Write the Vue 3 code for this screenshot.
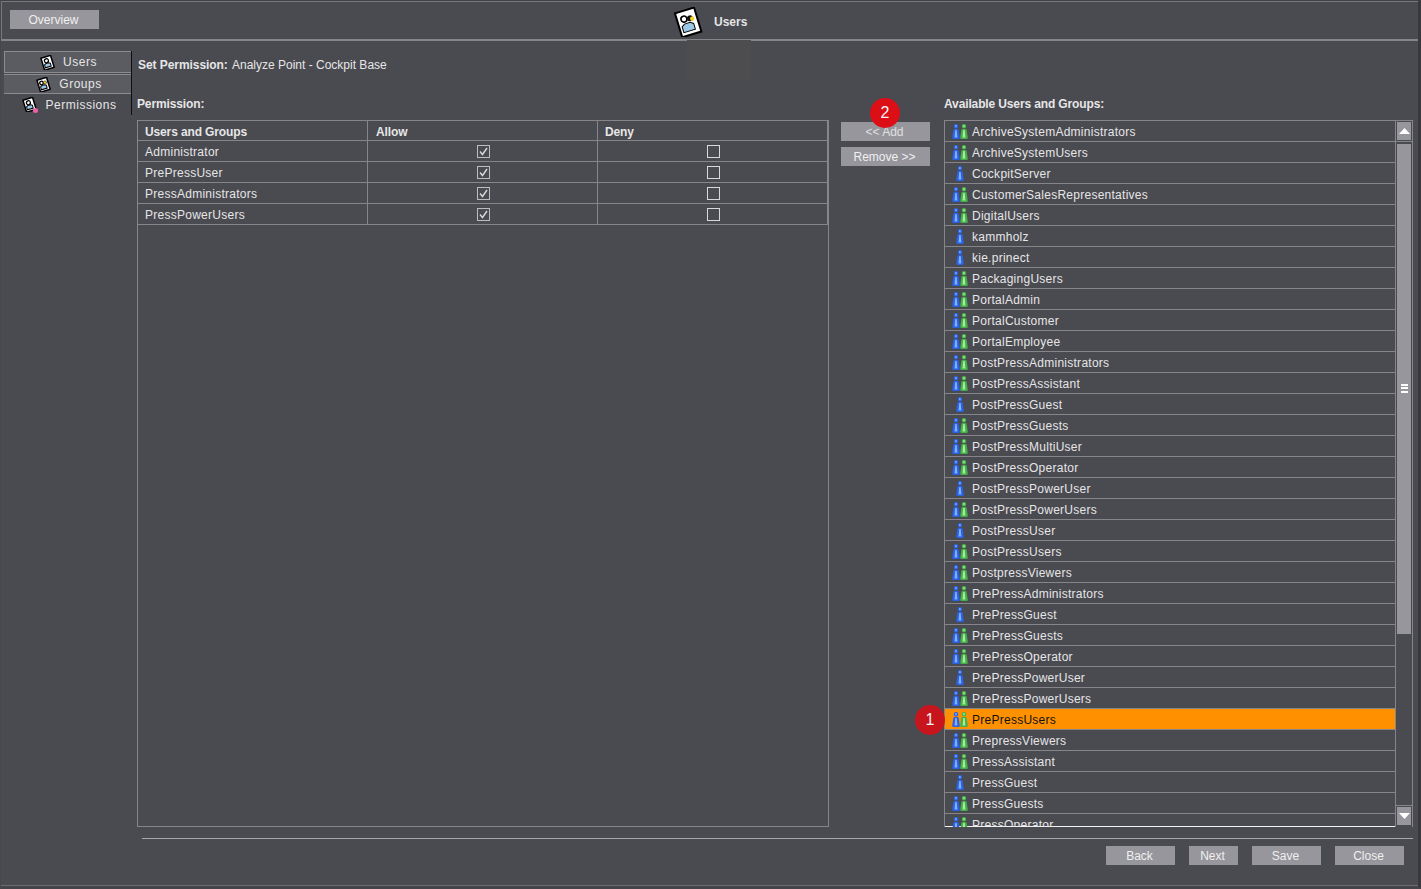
<script setup>
const permissions = [
  { name: 'Administrator' },
  { name: 'PrePressUser' },
  { name: 'PressAdministrators' },
  { name: 'PressPowerUsers' },
]

// g = group (two figures), u = single user
const available = [
  ['ArchiveSystemAdministrators', 'g'], ['ArchiveSystemUsers', 'g'], ['CockpitServer', 'u'],
  ['CustomerSalesRepresentatives', 'g'], ['DigitalUsers', 'g'], ['kammholz', 'u'], ['kie.prinect', 'u'],
  ['PackagingUsers', 'g'], ['PortalAdmin', 'g'], ['PortalCustomer', 'g'], ['PortalEmployee', 'g'],
  ['PostPressAdministrators', 'g'], ['PostPressAssistant', 'g'], ['PostPressGuest', 'u'],
  ['PostPressGuests', 'g'], ['PostPressMultiUser', 'g'], ['PostPressOperator', 'g'],
  ['PostPressPowerUser', 'u'], ['PostPressPowerUsers', 'g'], ['PostPressUser', 'u'],
  ['PostPressUsers', 'g'], ['PostpressViewers', 'g'], ['PrePressAdministrators', 'g'],
  ['PrePressGuest', 'u'], ['PrePressGuests', 'g'], ['PrePressOperator', 'g'],
  ['PrePressPowerUser', 'u'], ['PrePressPowerUsers', 'g'], ['PrePressUsers', 'g'],
  ['PrepressViewers', 'g'], ['PressAssistant', 'g'], ['PressGuest', 'u'], ['PressGuests', 'g'],
  ['PressOperator', 'g'],
].map(([name, type]) => ({ name, type }))

const figure = 'M1.7 2.2a2.3 2.2 0 1 1 4.6 0a2.3 2.2 0 1 1-4.6 0zM1.4 5.4Q1.5 5 2.4 5H5.6Q6.5 5 6.6 5.4L7.8 13.4Q8 15 6.5 15H1.5Q0 15 .2 13.4z'
const shine = 'M3.2 1h1.4v2.2H3.2zM3.2 6h1.5l.7 7.5H2.5z'
</script>

<template>
  <div class="screen">
    <header class="topbar">
      <button class="btn overview">Overview</button>
      <div class="title">
        <svg width="30" height="30" viewBox="0 0 30 30">
          <g transform="rotate(-17 15 15)">
            <rect x="5" y="3" width="20" height="25" fill="#fff" stroke="#000" stroke-width="2" />
            <path d="M7 3v-1M10 3v-1M13 3v-1M16 3v-1M19 3v-1M22 3v-1" stroke="#000" />
            <path d="M8 24v-6l3-2h6l3 2v6z" fill="#9cc8e6" stroke="#000" />
            <circle cx="12" cy="11" r="3" fill="#fff" stroke="#000" stroke-width="1.6" />
            <circle cx="18" cy="12" r="3" fill="#111" />
            <circle cx="20" cy="13" r="2.2" fill="#f4d320" />
          </g>
        </svg>
        <span>Users</span>
      </div>
      <div class="ghost"></div>
    </header>

    <div class="content">
      <nav class="sidenav">
        <a class="nav-item tab first">
          <svg width="15" height="15" viewBox="0 0 30 30">
            <g transform="rotate(-17 15 15)">
              <rect x="5" y="3" width="20" height="25" fill="#fff" stroke="#000" stroke-width="3" />
              <path d="M8 24v-6l3-2h6l3 2v6z" fill="#9cc8e6" stroke="#000" stroke-width="2" />
              <circle cx="14" cy="11" r="4" fill="#fff" stroke="#000" stroke-width="2.5" />
            </g>
          </svg>
          <span>Users</span>
        </a>
        <a class="nav-item tab second">
          <svg width="15" height="15" viewBox="0 0 30 30">
            <g transform="rotate(-17 15 15)">
              <rect x="5" y="3" width="20" height="25" fill="#fff" stroke="#000" stroke-width="3" />
              <path d="M8 24v-6l3-2h6l3 2v6z" fill="#9cc8e6" stroke="#000" stroke-width="2" />
              <circle cx="12" cy="11" r="3.5" fill="#fff" stroke="#000" stroke-width="2.5" />
              <circle cx="19" cy="12" r="3" fill="#f4d320" stroke="#000" />
            </g>
          </svg>
          <span>Groups</span>
        </a>
        <a class="nav-item third">
          <span class="perm-icon">
            <svg width="15" height="15" viewBox="0 0 30 30">
              <g transform="rotate(-17 15 15)">
                <rect x="5" y="3" width="20" height="25" fill="#fff" stroke="#000" stroke-width="3" />
                <path d="M8 24v-6l3-2h6l3 2v6z" fill="#9cc8e6" stroke="#000" stroke-width="2" />
                <circle cx="14" cy="11" r="4" fill="#fff" stroke="#000" stroke-width="2.5" />
              </g>
            </svg>
            <i class="pink-dot"></i>
          </span>
          <span>Permissions</span>
        </a>
      </nav>

      <main class="main">
        <div class="set-line"><b>Set Permission:</b> Analyze Point - Cockpit Base</div>

        <div class="columns">
          <section class="left">
            <h3 class="label">Permission:</h3>
            <div class="table-box">
              <div class="tr head">
                <div class="td c1">Users and Groups</div>
                <div class="td c2">Allow</div>
                <div class="td c3">Deny</div>
              </div>
              <div v-for="row in permissions" :key="row.name" class="tr">
                <div class="td c1">{{ row.name }}</div>
                <div class="td c2 center">
                  <svg width="13" height="13" viewBox="0 0 13 13">
                    <rect x="0.5" y="0.5" width="12" height="12" fill="none" stroke="#bdbdbd" />
                    <path d="M3 6.5l2.5 3L10 3" fill="none" stroke="#d8d8d8" stroke-width="1.4" />
                  </svg>
                </div>
                <div class="td c3 center">
                  <svg width="13" height="13" viewBox="0 0 13 13">
                    <rect x="0.5" y="0.5" width="12" height="12" fill="none" stroke="#d8d8d8" />
                  </svg>
                </div>
              </div>
            </div>
          </section>

          <section class="middle">
            <button class="btn wide add">&lt;&lt; Add<span class="badge two">2</span></button>
            <button class="btn wide">Remove &gt;&gt;</button>
          </section>

          <section class="right">
            <h3 class="label">Available Users and Groups:</h3>
            <div class="list-box">
              <div class="list">
                <div
                  v-for="item in available"
                  :key="item.name"
                  class="item"
                  :class="{ selected: item.name === 'PrePressUsers' }"
                >
                  <span class="figures" :class="{ single: item.type === 'u' }">
                    <svg width="8" height="15" viewBox="0 0 8 15"><path :d="figure" fill="#2a62e6" /><path :d="shine" fill="#7fb0ff" /></svg>
                    <svg v-if="item.type === 'g'" width="8" height="15" viewBox="0 0 8 15"><path :d="figure" fill="#45b045" /><path :d="shine" fill="#a4eca4" /></svg>
                  </span>
                  <span>{{ item.name }}</span>
                  <span v-if="item.name === 'PrePressUsers'" class="badge one">1</span>
                </div>
              </div>
              <div class="scrollbar">
                <div class="arrow">
                  <svg width="11" height="6" viewBox="0 0 11 6"><path d="M5.5 0L11 6H0z" fill="#fff" /></svg>
                </div>
                <div class="track">
                  <div class="thumb">
                    <i></i><i></i><i></i>
                  </div>
                </div>
                <div class="arrow">
                  <svg width="11" height="6" viewBox="0 0 11 6"><path d="M5.5 6L11 0H0z" fill="#fff" /></svg>
                </div>
              </div>
            </div>
          </section>
        </div>

        <footer class="footer">
          <button class="btn back">Back</button>
          <button class="btn next">Next</button>
          <button class="btn back">Save</button>
          <button class="btn back">Close</button>
        </footer>
      </main>
    </div>
  </div>
</template>

<style>
html, body { margin: 0; background: #4a4a51; }
</style>

<style scoped>
.screen {
  width: 1421px;
  height: 889px;
  box-sizing: border-box;
  background: #4a4a51;
  border-style: solid;
  border-width: 1px 3px 3px 1px;
  border-color: #3f3f45 #38383d #44444a #46464c;
  box-shadow: inset 0 -1px #6c6c72;
  display: flex;
  flex-direction: column;
  font-family: "Liberation Sans", Arial, sans-serif;
  font-size: 12px;
  color: #e6e6e6;
  overflow: hidden;
}

.topbar {
  position: relative;
  height: 40px;
  flex: none;
  box-sizing: border-box;
  border-top: 1px solid #77777c;
  border-left: 1px solid #77777c;
  border-bottom: 2px solid #85858a;
  display: flex;
  align-items: flex-start;
  padding: 8px 0 0 8px;
}

.title {
  display: flex;
  align-items: center;
  gap: 11px;
  margin-left: 574px;
  margin-top: -4px;
  height: 32px;
  font-weight: bold;
  color: #e4e4e4;
}

.ghost {
  position: absolute;
  left: 685px;
  top: 38px;
  width: 64px;
  height: 40px;
  background: #4d4d50;
}

.btn {
  border: 0;
  padding: 0 2px 0 0;
  background: #96969c;
  color: #f0f0f0;
  font: 12px "Liberation Sans", Arial, sans-serif;
  height: 19px;
  display: block;
}

.overview { width: 89px; }

.content {
  flex: 1;
  display: flex;
  min-height: 0;
}

.sidenav {
  width: 131px;
  flex: none;
  height: 64px;
  margin-top: 10px;
  box-sizing: border-box;
  padding-left: 3px;
  border-right: 1px solid #0f0f12;
  display: flex;
  flex-direction: column;
  letter-spacing: 0.5px;
}

.nav-item {
  display: flex;
  align-items: center;
  justify-content: center;
  height: 21px;
  box-sizing: border-box;
  padding-left: 3px;
  color: #e6e6e6;
  gap: 8px;
}

.tab { background: #5b5b62; }

.first {
  border: 1px solid #8b8b90;
  border-right: 0;
  height: 22px;
  padding: 1px 0 0 1px;
}

.second {
  border-top: 1px solid #8b8b90;
  border-bottom: 1px solid #8b8b90;
  margin-top: 1px;
}

.perm-icon { position: relative; display: flex; margin-right: 1px; }

.pink-dot {
  position: absolute;
  right: -1px;
  bottom: -1px;
  width: 5px;
  height: 5px;
  border-radius: 50%;
  background: #ef5fa8;
}

.main {
  flex: 1;
  min-width: 0;
  display: flex;
  flex-direction: column;
  padding-left: 5px;
}

.set-line {
  height: 18px;
  margin-top: 15px;
  line-height: 18px;
  padding-left: 1px;
}

.set-line b { letter-spacing: -0.06px; margin-right: 1.5px; }

.columns {
  display: flex;
  margin-top: 16px;
  height: 737px;
}

.label {
  margin: 0;
  height: 24px;
  font-size: 12px;
  line-height: 16px;
  font-weight: bold;
  letter-spacing: -0.13px;
  color: #e6e6e6;
}

.left { width: 692px; flex: none; margin-top: 6px; }

.table-box {
  height: 707px;
  box-sizing: border-box;
  border: 1px solid #85858a;
}

.tr {
  display: flex;
  height: 21px;
  box-sizing: border-box;
  border-bottom: 1px solid #85858a;
  letter-spacing: 0.26px;
}

.head {
  height: 20px;
  font-weight: bold;
  letter-spacing: -0.13px;
}

.td {
  flex: none;
  box-sizing: border-box;
  padding: 1px 0 0 7px;
  line-height: 20px;
  width: 230px;
  border-right: 1px solid #85858a;
  height: 100%;
}

.head .c2 { padding-left: 8px; }

.center {
  display: flex;
  align-items: center;
  justify-content: center;
  padding: 0 0 0 2px;
}

.middle {
  width: 89px;
  flex: none;
  margin-left: 12px;
  padding-top: 32px;
  display: flex;
  flex-direction: column;
  gap: 6px;
}

.wide { width: 89px; position: relative; }
.add { color: #e0e0e0; }

.badge {
  position: absolute;
  width: 30px;
  height: 30px;
  border-radius: 50%;
  background: #c8151d;
  color: #f4f4f4;
  font: 16px/30px "Liberation Sans", Arial, sans-serif;
  letter-spacing: 0;
  text-align: center;
}

.two { left: 29px; top: -24px; background: #dc0f16; }
.one { left: -30px; top: -4px; }

.right {
  width: 469px;
  flex: none;
  margin-left: 14px;
  margin-top: 6px;
}

.list-box {
  height: 707px;
  box-sizing: border-box;
  border: 1px solid #85858a;
  border-bottom: 0;
  display: flex;
}

.list {
  flex: 1;
  min-width: 0;
  /* clips the last row but still lets the callout badge stick out on the left */
  clip-path: inset(0 0 0 -40px);
  border-bottom: 1px solid #f2f2f2;
}

.item {
  position: relative;
  height: 21px;
  box-sizing: border-box;
  border-bottom: 1px solid #85858a;
  display: flex;
  align-items: center;
  padding: 2px 0 0 7px;
  line-height: 20px;
  letter-spacing: 0.26px;
  color: #e6e6e6;
}

.selected {
  background: #ff9100;
  color: #111;
}

.figures {
  width: 20px;
  display: flex;
  height: 15px;
  margin-top: -2px;
}

.figures.single { padding-left: 4px; box-sizing: border-box; }

.scrollbar {
  width: 16px;
  flex: none;
  border-left: 1px solid #85858a;
  display: flex;
  flex-direction: column;
  padding-bottom: 1px;
}

.arrow {
  height: 18px;
  flex: none;
  background: #96969c;
  border: 1px solid #4a4a51;
  display: flex;
  align-items: center;
  justify-content: center;
}

.track {
  flex: 1;
  padding-top: 2px;
  border-bottom: 1px solid #85858a;
  border-top: 1px solid #85858a;
  box-sizing: border-box;
}

.thumb {
  height: 490px;
  box-sizing: border-box;
  margin: 0 1px;
  padding-bottom: 2px;
  background: #96969c;
  display: flex;
  flex-direction: column;
  align-items: center;
  justify-content: center;
  gap: 1.5px;
}

.thumb i {
  width: 7px;
  height: 2px;
  background: #fff;
}

.footer {
  border-top: 1px solid #a9a9ad;
  margin: 11px 5px 0 5px;
  padding: 7px 9px 0 0;
  display: flex;
  justify-content: flex-end;
  gap: 14px;
}

.back { width: 69px; }
.next { width: 49px; }
</style>
